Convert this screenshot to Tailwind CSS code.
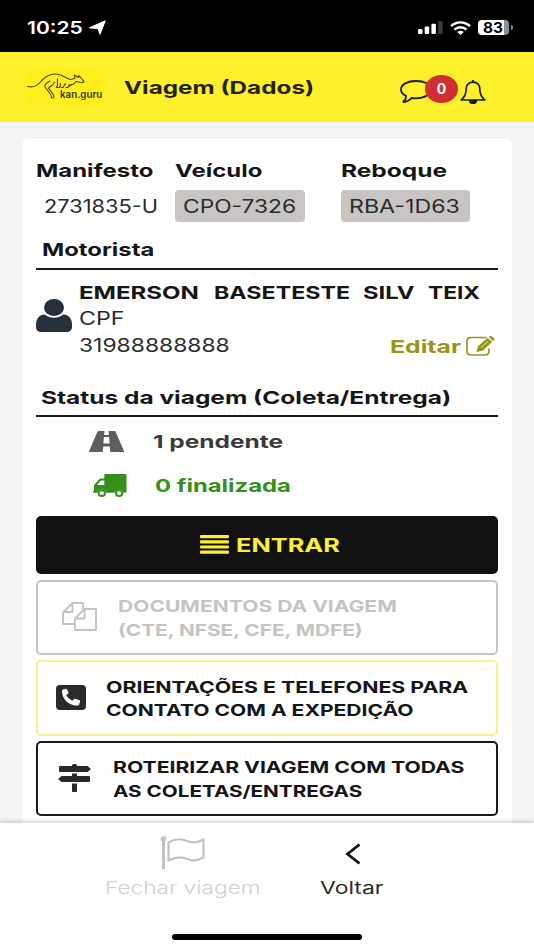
<!DOCTYPE html>
<html lang="pt-BR">
<head>
    <meta charset="UTF-8">
    <meta name="viewport" content="width=device-width, initial-scale=1.0">
    <title>Viagem (Dados)</title>
    <script src="https://cdn.jsdelivr.net/npm/@tailwindcss/browser@4"></script>
</head>
<body class="bg-[#f4f4f5] font-['Inter',sans-serif] text-[#161616]">

<div id="app" class="h-[950px] w-[534px] overflow-hidden flex flex-col whitespace-nowrap">
    <!-- Status bar -->
    <div class="h-[52px] shrink-0 bg-black text-white flex items-center pl-[27px] pr-[21px] pt-[3px]">
        <div class="w-[62px] text-[17.5px] leading-none font-semibold"><span class="inline-block origin-left scale-x-[1.2]">10:25</span></div>
        <svg class="w-[17px] h-[15px]" viewBox="0 0 17 15" fill="currentColor" stroke="currentColor" stroke-width="1.200" stroke-linejoin="round"><path d="M16 1 .8 7.800l8.400.7L11 14z"/></svg>
        <div class="ml-auto flex items-center">
            <svg class="w-[25px] h-[13px]" viewBox="0 0 25 13" fill="currentColor"><rect x="0" y="8" width="4.500" height="5" rx="1"/><rect x="6.700" y="5.500" width="4.500" height="7.500" rx="1"/><rect x="13.400" y="2.800" width="4.500" height="10.200" rx="1"/><rect x="20.100" y="0" width="4.500" height="13" rx="1" fill="#3a3a3c"/></svg>
            <svg class="ml-[7px] w-[21px] h-[14px]" viewBox="0 0 21 14" fill="none" stroke="currentColor" stroke-width="2.400"><path d="M1 5.200C6.500.1 14.500.1 20 5.200M4.500 8.600c3.500-3.200 8.500-3.200 12 0"/><path d="M7.200 10.900c2-1.700 4.600-1.700 6.600 0L10.500 14z" fill="currentColor" stroke="none"/></svg>
            <div class="ml-[7px] mr-[2px] w-[31px] h-[15px] rounded-[4px] bg-linear-to-r from-white from-84% to-[#8e8e93] to-84% text-black text-[14px] leading-[15px] font-bold text-center"><span class="inline-block scale-x-[1.1]">83</span></div>
            <div class="w-[2px] h-[5px] rounded-r-full bg-[#8e8e93]"></div>
        </div>
    </div>

    <!-- Header -->
    <header class="h-[70px] shrink-0 bg-[#fef02d] flex items-center pl-[24px] pr-[48px]">
        <div class="relative w-[81px] h-[34px] rounded-xl bg-[#ffee1c]">
            <svg class="w-[81px] h-[34px]" viewBox="0 0 81 34" fill="none" stroke="#4b4300" stroke-width="1.100" stroke-linecap="round" stroke-linejoin="round">
                <path d="M3.500 16.500c5 1 9 0 12-3.500C20 7.500 25 4 31 4c6.500 0 9.500 3.500 15 5.500l5-1-.8-3.500 4.300 2.500.5-2 5 6.200-2 1-6-1.200c-2 3-4.500 4-7.500 3.500"/>
                <path d="M26 11c-3 1.500-6 3.500-5 6l6 8 .5 3 2.200-.2v-2.600l-5.200-7c1-2 5.500-2.500 6-6.200"/>
                <path d="M33.500 9c-1 3 1.500 6-1 8.500h2.500c1.500-1 1.500-3 1.200-4M37 17.500h2l2.500-4M42 17.500h1.500l4-3"/>
            </svg>
            <span class="absolute left-[36px] top-[17px] text-[10px] leading-[14px] font-semibold text-[#3b3500] origin-left scale-x-[0.98]">kan.guru</span>
        </div>
        <h1 class="ml-[19px] mt-[2px] text-[18px] leading-6 font-bold text-[#262105]"><span class="inline-block origin-left scale-x-[1.348]">Viagem (Dados)</span></h1>
        <div class="relative ml-auto flex items-center gap-[28px] mt-[9px]">
            <svg class="w-[32px] h-[23px]" viewBox="0 0 32 23" fill="none" stroke="#1f1c05" stroke-width="1.800" stroke-linejoin="round"><path d="M16 1C7.500 1 1 4.500 1 9.500c0 3 2 5 5.200 6.600C6 18.500 5 20.500 3.200 22c3.800-.2 6.600-1.600 8.300-4 1.500.3 3 .4 4.500.4 8.500 0 15-4 15-9S24.500 1 16 1z"/></svg>
            <svg class="w-[26px] h-[24px]" viewBox="0 0 26 24" fill="none" stroke="#1f1c05" stroke-width="1.700" stroke-linejoin="round"><path d="M13 2.200c-4.500 0-6.800 3-6.800 6.800 0 5.500-2 8.500-5 11h23.600c-3-2.500-5-5.500-5-11 0-3.800-2.300-6.800-6.800-6.800zM13 0v2.500"/><path d="M9.500 20.500c.3 3.800 6.700 3.800 7 0z" fill="#1f1c05"/></svg>
            <span class="absolute left-[25px] -top-[5px] w-[33px] h-[28px] rounded-[50%] bg-[#cf2f33] text-white text-[14px] leading-[28px] font-bold text-center">0</span>
        </div>
    </header>

    <!-- Trip card -->
    <main class="mx-[22px] mt-[17px] w-[490px] h-[684px] shrink-0 bg-white rounded-t-md px-[14px] pt-[20px] flex flex-col">
        <div class="grid grid-cols-[139px_166px_1fr] text-[18px] leading-6 font-bold">
            <div><span class="inline-block origin-left scale-x-[1.33]">Manifesto</span></div>
            <div><span class="inline-block origin-left scale-x-[1.33]">Veículo</span></div>
            <div><span class="inline-block origin-left scale-x-[1.36]">Reboque</span></div>
        </div>
        <div class="mt-[7px] h-[32px] grid grid-cols-[139px_166px_1fr] text-[18px] leading-[34px] text-[#2b2b2b]">
            <div class="pl-[8px]"><span class="inline-block origin-left scale-x-[1.21]">2731835-U</span></div>
            <div class="w-[130px] h-[32px] rounded-[4px] bg-[#c9c4c4] pl-[8px]"><span class="inline-block origin-left scale-x-[1.265]">CPO-7326</span></div>
            <div class="w-[129px] h-[32px] rounded-[4px] bg-[#c9c4c4] pl-[8px]"><span class="inline-block origin-left scale-x-[1.288]">RBA-1D63</span></div>
        </div>

        <!-- Driver -->
        <h2 class="mt-[15px] h-[33px] pl-[6px] pt-[1px] text-[18px] leading-6 font-bold border-b-2 border-[#1c1c1c]"><span class="inline-block origin-left scale-x-[1.325]">Motorista</span></h2>
        <div class="h-[115px] flex">
            <svg class="mt-[29px] w-[36px] h-[33px] shrink-0" viewBox="0 0 36 33" fill="#25303a"><ellipse cx="18" cy="8.500" rx="10" ry="8.500"/><path d="M9 15.500c5 4.300 13 4.300 18 0 6 0 9 4.500 9 10.500v2c0 3-2.200 5-5.500 5h-25C2.200 33 0 31 0 28v-2c0-6 3-10.500 9-10.500z"/></svg>
            <div class="ml-[7px] flex-1 pt-[11px]">
                <div class="grid grid-cols-[135px_149px_65px_1fr] text-[18px] leading-6 font-bold">
                    <div><span class="inline-block origin-left scale-x-[1.335]">EMERSON</span></div>
                    <div><span class="inline-block origin-left scale-x-[1.29]">BASETESTE</span></div>
                    <div><span class="inline-block origin-left scale-x-[1.32]">SILV</span></div>
                    <div><span class="inline-block origin-left scale-x-[1.26]">TEIX</span></div>
                </div>
                <div class="mt-[2px] text-[18px] leading-6 text-[#2b2b2b]"><span class="inline-block origin-left scale-x-[1.29]">CPF</span></div>
                <div class="mt-[1px] h-[28px] flex text-[18px] leading-[28px] text-[#2b2b2b]">
                    <span class="inline-block origin-left scale-x-[1.27]">31988888888</span>
                    <a class="ml-auto flex items-center pr-[3px] pt-[2px] text-[#98941c]">
                        <span class="w-[76px] font-bold"><span class="inline-block origin-left scale-x-[1.375]">Editar</span></span>
                        <svg class="w-[29px] h-[20px] -mt-[3px]" viewBox="0 0 29 20" fill="none" stroke="currentColor" stroke-width="1.700"><path d="M20.500 1.500H5C2.500 1.500 1 3 1 5v10c0 2.500 1.500 4 4 4h14c2.500 0 4-1.500 4-4v-2.500"/><path d="M21.500 1.800 26.200 6 16.500 14.800l-6 1.300 1.300-5.600z" fill="currentColor" stroke="none"/><path d="m22.700 1 1.500-.9c.6-.3 1.200-.2 1.700.3l2.200 2c.5.500.6 1.100.1 1.600L27.200 5.200z" fill="currentColor" stroke="none"/><path d="m15 11.500 7-6.200" stroke="#fff" stroke-width=".7"/></svg>
                    </a>
                </div>
            </div>
        </div>

        <!-- Trip status -->
        <h2 class="h-[32px] pl-[5px] pt-[1px] text-[18px] leading-6 font-bold border-b-2 border-[#1c1c1c]"><span class="inline-block origin-left scale-x-[1.359]">Status da viagem (Coleta/Entrega)</span></h2>
        <div class="h-[99px] pt-[11px] text-[18px] font-bold">
            <div class="h-[26px] flex items-center pl-[53px] text-[#3a3a3a]">
                <svg class="w-[35px] h-[21px]" viewBox="0 0 35 21" fill="#5e5e5e"><path d="M9.500 0h6l-.4 4h4.800l-.4-4h6.100c.5 0 .8.200 1 .7L35 20c.1.700 0 1-.8 1H21.300l-.5-5.500h-6.600l-.5 5.500H.8C0 21-.1 20.600.2 20L8.400.7c.2-.5.600-.7 1.100-.7zm5.400 6-.5 6.500h6.200L20.100 6z"/></svg>
                <span class="ml-[29px] inline-block origin-left scale-x-[1.36]">1 pendente</span>
            </div>
            <div class="mt-[18px] h-[26px] flex items-center pl-[57px] text-[#35901b]">
                <svg class="w-[34px] h-[23px]" viewBox="0 0 34 23" fill="currentColor"><path d="M12.500 0H32c1 0 1.500.5 1.500 1.400v16.200c0 .8-.5 1.100-1.500 1.100h-1.500a4.500 4.200 0 0 0-8.800 0h-8.500a4.500 4.200 0 0 0-8.800 0H1c-.7 0-1-.4-1-1 0-.5.300-.8 1-.9v-4c0-1.500.3-2.300 1.400-3.400l3.200-3.500C6.500 5 7.300 4.500 8.700 4.500h2.600V1.400C11.300.5 11.700 0 12.500 0zM9 6.600c-.8 0-1.100.1-1.600.7L4 11h7.300V6.600z"/><path fill-rule="evenodd" d="M8.800 15.200a4.200 3.900 0 1 0 0 7.800 4.200 3.900 0 0 0 0-7.800zm0 2a2.200 1.900 0 1 1 0 3.800 2.200 1.900 0 0 1 0-3.800zM26.100 15.200a4.200 3.900 0 1 0 0 7.800 4.200 3.900 0 0 0 0-7.800zm0 2a2.200 1.900 0 1 1 0 3.800 2.200 1.900 0 0 1 0-3.800z"/></svg>
                <span class="ml-[28px] inline-block origin-left scale-x-[1.325]">0 finalizada</span>
            </div>
        </div>

        <!-- Actions -->
        <button class="h-[58px] shrink-0 rounded-[5px] bg-[#111] flex items-center pl-[164px] pt-[2px] text-[#fbee3a] text-[19px] font-bold">
            <svg class="w-[29px] h-[19px] -mt-[4px]" viewBox="0 0 29 19" fill="currentColor"><rect width="29" height="3.200" rx="1"/><rect y="5.200" width="29" height="3.200" rx="1"/><rect y="10.400" width="29" height="3.200" rx="1"/><rect y="15.600" width="29" height="3.200" rx="1"/></svg>
            <span class="ml-[7px] inline-block origin-left scale-x-[1.335]">ENTRAR</span>
        </button>
        <button class="mt-[6px] h-[75px] shrink-0 rounded-[5px] border-2 border-[#c6c6c6] flex items-center pl-[24px] pt-[2px] text-left text-[16px] leading-[23.500px] font-bold text-[#c4c4c4]">
            <svg class="w-[35px] h-[29px] -mt-[4px]" viewBox="0 0 35 29" fill="none" stroke="currentColor" stroke-width="1.900" stroke-linejoin="round"><path d="M13 22H1V10.500L10.500 1H21v6M10.500 1v9H1"/><path d="M22.500 7H34v21H13V16.500zM22.500 7v9.500H13"/></svg>
            <span class="ml-[21px]">
                <span class="block w-max origin-left scale-x-[1.315]">DOCUMENTOS DA VIAGEM</span>
                <span class="block w-max origin-left scale-x-[1.298]">(CTE, NFSE, CFE, MDFE)</span>
            </span>
        </button>
        <button class="mt-[5px] h-[76px] shrink-0 rounded-[5px] border-2 border-[#f6f08c] flex items-center pl-[18px] pt-[2px] text-left text-[16px] leading-[23.500px] font-bold">
            <svg class="w-[30px] h-[25px] -mt-[4px]" viewBox="0 0 30 25"><rect width="30" height="25" rx="4" fill="#2a2a2a"/><path d="M7.200 4.400 10 3.700c.4-.1.800.1.900.5l1.600 3.400c.1.400 0 .8-.3 1l-2 1.500c1.300 2.500 3.400 4.400 6.200 5.600l1.700-1.700c.3-.3.700-.4 1.100-.2l4.400 1.400c.5.200.7.600.5 1l-1 3.600c-.1.500-.5.800-1.100.8C12.800 20.600 6 14.200 6 5.900c0-.8.300-1.300 1.200-1.500z" fill="#fff"/></svg>
            <span class="ml-[20px]">
                <span class="block w-max origin-left scale-x-[1.332]">ORIENTAÇÕES E TELEFONES PARA</span>
                <span class="block w-max origin-left scale-x-[1.316]">CONTATO COM A EXPEDIÇÃO</span>
            </span>
        </button>
        <button class="mt-[5px] h-[75px] shrink-0 rounded-[5px] border-2 border-[#1a1a1a] flex items-center pl-[20px] pt-[2px] text-left text-[16px] leading-[23.500px] font-bold">
            <svg class="w-[33px] h-[28px] -mt-[3px]" viewBox="0 0 33 28" fill="#2a2a2a"><path d="M14 1.500c0-2 5-2 5 0V2h10.500L33 5l-3.500 3H2.500C1.500 8 1 7.600 1 6.800V3.200C1 2.400 1.500 2 2.500 2H14zM14 9.500h5V12h11.500c1 0 1.500.4 1.500 1.200v3.600c0 .8-.5 1.200-1.500 1.200h-27L0 15l3.500-3H14zM14 19.500h5V27c0 .7-.4 1-1 1h-3c-.6 0-1-.3-1-1z"/></svg>
            <span class="ml-[22px]">
                <span class="block w-max origin-left scale-x-[1.323]">ROTEIRIZAR VIAGEM COM TODAS</span>
                <span class="block w-max origin-left scale-x-[1.291]">AS COLETAS/ENTREGAS</span>
            </span>
        </button>
    </main>

    <!-- Bottom navigation -->
    <nav class="relative h-[127px] shrink-0 bg-white shadow-[0_-1px_5px_rgba(0,0,0,0.22)] flex">
        <a class="ml-[105px] w-[215px] pt-[13px] text-[#cfcfcf]">
            <svg class="ml-[55px] w-[45px] h-[33px]" viewBox="0 0 45 33" fill="none" stroke="#c3c3c3" stroke-width="2.200"><circle cx="3.500" cy="3" r="2.800" fill="#c3c3c3" stroke="none"/><path d="M3.500 3v30" stroke-width="3"/><path d="M8.500 6.500c6-3.500 12-4.500 18.500-1.500 6 2.500 11 1.500 16.500-1.500v18c-5.500 3-10.500 4-16.500 1.500-6.500-3-12.500-1.500-18.500 1.500z"/></svg>
            <div class="mt-[7px] text-[17px] leading-[24px] font-light"><span class="inline-block origin-left scale-x-[1.334]">Fechar viagem</span></div>
        </a>
        <a class="pt-[20px] text-[#2b2b2b]">
            <svg class="ml-[25px] w-[16px] h-[22px]" viewBox="0 0 16 22" fill="none" stroke="#111" stroke-width="2.800"><path d="M14.500 1.500 2.500 11l12 9.500"/></svg>
            <div class="mt-[11px] text-[17px] leading-[24px]"><span class="inline-block origin-left scale-x-[1.35]">Voltar</span></div>
        </a>
        <div class="absolute left-[172px] bottom-[10px] w-[190px] h-[6px] rounded-full bg-black"></div>
    </nav>
</div>

</body>
</html>
